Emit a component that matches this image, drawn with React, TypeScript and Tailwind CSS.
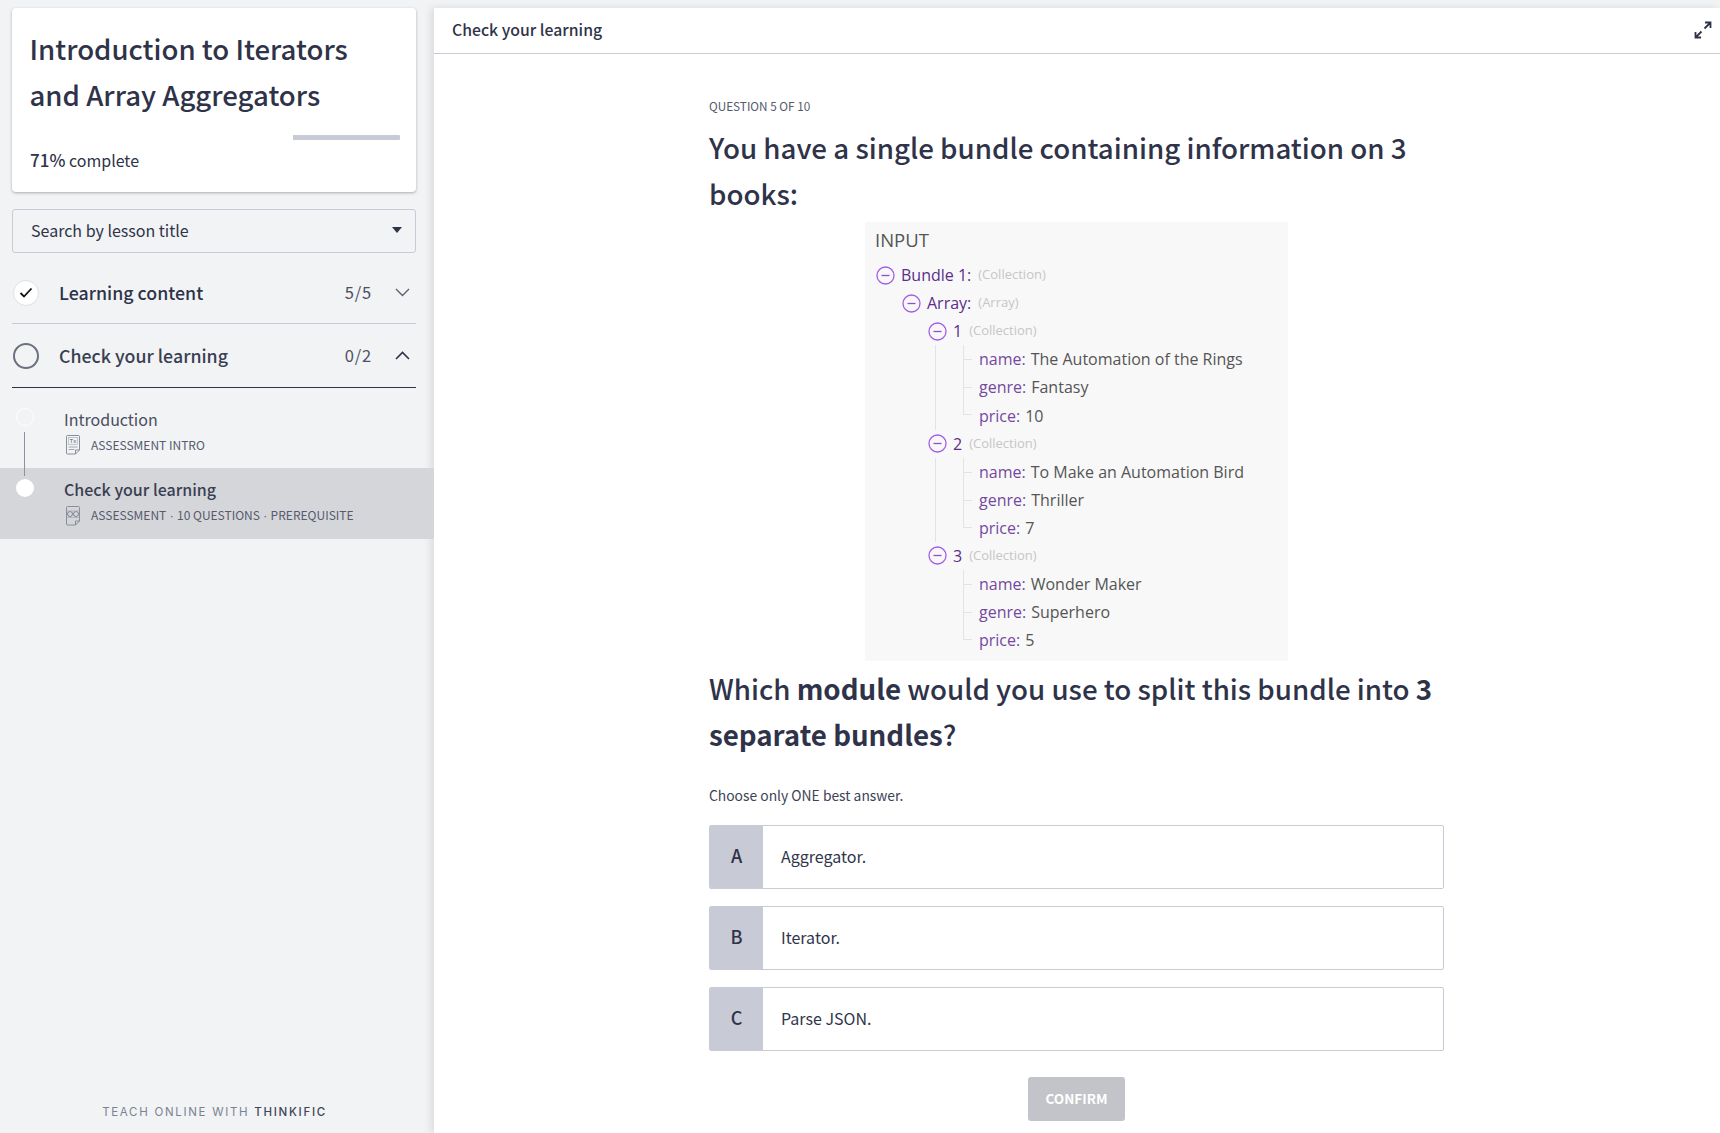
import React from "react";

const sans = "font-['Noto_Sans_CJK_SC','Noto_Sans',sans-serif]";

function DocIcon({ kind }: { kind: "tx" | "quiz" }) {
  return (
    <svg width="16" height="20" viewBox="0 0 16 20" fill="none" className="shrink-0">
      <path d="M1.5 1.5a1 1 0 0 1 1-1h11a1 1 0 0 1 1 1v13.5l-4 4h-8a1 1 0 0 1-1-1z" stroke="#8a8d9a" strokeWidth="1" />
      <path d="M10.5 19v-4h4" stroke="#8a8d9a" strokeWidth="1" />
      {kind === "tx" ? (
        <>
          <rect x="3.5" y="2.5" width="9" height="7" stroke="#a5a7b2" strokeWidth=".6" />
          <text x="4.5" y="8" fontSize="6" fill="#555a6c" fontFamily="Liberation Sans">Tx</text>
          <path d="M3.5 12h9M3.5 14.5h6" stroke="#a5a7b2" strokeWidth="1" />
        </>
      ) : (
        <>
          <circle cx="5" cy="8" r="2.5" stroke="#777b8a" strokeWidth=".9" />
          <circle cx="11" cy="8" r="2.5" stroke="#777b8a" strokeWidth=".9" />
          <path d="M1.5 5h13M1.5 11.5h13" stroke="#a5a7b2" strokeWidth=".7" />
        </>
      )}
    </svg>
  );
}

function Minus() {
  return (
    <svg width="19" height="19" viewBox="0 0 19 19" fill="none" className="shrink-0">
      <circle cx="9.5" cy="9.5" r="8.5" stroke="#a25ce8" strokeWidth="1.3" />
      <path d="M5.5 9.5h8" stroke="#8f4fd0" strokeWidth="1.3" />
    </svg>
  );
}

function Node({ indent, label, type }: { indent: string; label: string; type: string }) {
  return (
    <div className={`flex h-[28.1px] items-center ${indent}`}>
      <Minus />
      <span className="ml-[6px] text-[16px] text-[#5b2d8c]">{label}</span>
      <span className="ml-[7px] text-[13px] text-[#c6c6c6]">{type}</span>
    </div>
  );
}

function Field({ k, v, last }: { k: string; v: string; last?: boolean }) {
  return (
    <div className="relative flex h-[28.1px] items-center pl-[16px]">
      <span className={`absolute left-0 top-0 w-[9px] border-l border-[#e3e3e3] ${last ? "h-[14px] border-b" : "h-full"}`} />
      {!last && <span className="absolute left-0 top-[14px] h-px w-[9px] bg-[#e3e3e3]" />}
      <span className="text-[16px] text-[#74489f]">{k}</span>
      <span className="ml-[5px] text-[16px] text-[#555555]">{v}</span>
    </div>
  );
}

function Book({ n, items, line }: { n: string; items: [string, string][]; line: boolean }) {
  return (
    <div>
      <Node indent="ml-[62px]" label={n} type="(Collection)" />
      <div className={`ml-[69px] pl-[27px] ${line ? "border-l border-[#e3e3e3]" : "border-l border-transparent"}`}>
        {items.map(([k, v], i) => (
          <Field key={k} k={k} v={v} last={i === items.length - 1} />
        ))}
      </div>
    </div>
  );
}

function TreeImage() {
  return (
    <div className="mx-auto h-[439px] w-[423px] bg-[#f8f8f8] pl-[10px] pt-[2px] font-['Open_Sans',sans-serif]">
      <div className="flex h-[37px] items-center pb-[6px] text-[18.5px] text-[#555555]">INPUT</div>
      <div className="-ml-[10px] pl-[1px]">
        <Node indent="ml-[10px]" label="Bundle 1:" type="(Collection)" />
        <Node indent="ml-[36px]" label="Array:" type="(Array)" />
        <Book n="1" line items={[["name:", "The Automation of the Rings"], ["genre:", "Fantasy"], ["price:", "10"]]} />
        <Book n="2" line items={[["name:", "To Make an Automation Bird"], ["genre:", "Thriller"], ["price:", "7"]]} />
        <Book n="3" line={false} items={[["name:", "Wonder Maker"], ["genre:", "Superhero"], ["price:", "5"]]} />
      </div>
    </div>
  );
}

function Option({ letter, text }: { letter: string; text: string }) {
  return (
    <div className="flex h-[64px] overflow-hidden rounded-[2px] border border-[#c8cad5] bg-white">
      <div className="flex w-[53px] shrink-0 items-center justify-center bg-[#c8cad5] pb-[3px] text-[18px] font-medium text-[#2f3349]">{letter}</div>
      <div className="flex items-center pb-[3px] pl-[18px] text-[16px] text-[#30354a]">{text}</div>
    </div>
  );
}

function Dot() {
  return <span className="font-['Liberation_Sans',sans-serif]"> · </span>;
}

export default function App() {
  return (
    <div className={`flex h-[1133px] w-[1720px] overflow-hidden bg-[#f1f3f5] text-[#2f3349] ${sans}`}>
      <aside className="flex w-[434px] shrink-0 flex-col pt-2">
        <div className="mx-3 h-[184px] w-[404px] rounded-[4px] bg-white px-[18px] pt-[17px] shadow-[0_1px_3px_rgba(0,0,0,0.3)]">
          <h1 className="-ml-[0.5px] text-[27.6px] font-medium leading-[46px]">Introduction to Iterators and Array Aggregators</h1>
          <div className="mt-[18px] flex h-[5px] w-[370px] rounded-[1px] bg-[#c8cad5]">
            <div className="w-[71%] bg-white" />
          </div>
          <div className="mt-[7px] text-[16px] leading-[26px]">
            <span className="text-[17px] font-medium">71%</span> complete
          </div>
        </div>
        <div className="mx-3 mt-[17px] flex h-[44px] w-[404px] items-center justify-between rounded-[3px] border border-[#c8cad5] pb-[3px] pl-[18px] pr-[13px] text-[16px]">
          <span>Search by lesson title</span>
          <span className="h-0 w-0 border-x-[5px] border-t-[6px] border-x-transparent border-t-[#2f3349]" />
        </div>

        <div className="mx-3 mt-[17px] flex h-[54px] w-[404px] items-center border-b border-[#c8cad5] pb-[8px] pl-[1px]">
          <span className="flex h-[26px] w-[26px] items-center justify-center rounded-full border border-[#dde0e6] bg-white">
            <svg width="14" height="11" viewBox="0 0 14 11" fill="none">
              <path d="M1.5 6l3.5 3.5 7.5-8" stroke="#111" strokeWidth="1.8" />
            </svg>
          </span>
          <span className="ml-[20px] text-[17.8px] font-medium">Learning content</span>
          <span className="ml-auto text-[16.5px] tracking-[0.8px] text-[#4d5163]">5/5</span>
          <svg className="ml-[23px] mr-[6px]" width="15" height="9" viewBox="0 0 15 9" fill="none">
            <path d="M1 1l6.5 6.5L14 1" stroke="#5d6172" strokeWidth="1.4" />
          </svg>
        </div>
        <div className="mx-3 flex h-[64px] w-[404px] items-center border-b border-[#2f3349] pl-[1px]">
          <span className="h-[26px] w-[26px] rounded-full border-2 border-[#6c7080]" />
          <span className="ml-[20px] text-[17.8px] font-medium text-[#3a3e52]">Check your learning</span>
          <span className="ml-auto text-[16.5px] tracking-[0.8px] text-[#4d5163]">0/2</span>
          <svg className="ml-[23px] mr-[6px]" width="15" height="9" viewBox="0 0 15 9" fill="none">
            <path d="M1 8l6.5-6.5L14 8" stroke="#2f3349" strokeWidth="1.6" />
          </svg>
        </div>

        <div className="relative h-[80px] pl-[64px] pt-[18px]">
          <span className="absolute left-[16px] top-[20px] h-[18px] w-[18px] rounded-full border border-white" />
          <span className="absolute left-[24px] top-[44px] h-[36px] w-px bg-[#8d90a0]" />
          <div className="text-[16px] leading-[26px] text-[#4a4e61]">Introduction</div>
          <div className="mt-[3px] flex items-center gap-[10px] text-[12px] leading-[20px] text-[#565a6c]">
            <span className="ml-[1px]"><DocIcon kind="tx" /></span>
            <span>ASSESSMENT INTRO</span>
          </div>
        </div>
        <div className="relative h-[71px] bg-[#d5d6da] pl-[64px] pt-[8px]">
          <span className="absolute left-[16px] top-[11px] h-[18px] w-[18px] rounded-full bg-white" />
          <span className="absolute left-[24px] top-0 h-[8px] w-px bg-[#8d90a0]" />
          <div className="text-[16px] font-medium leading-[26px] text-[#3a3e52]">Check your learning</div>
          <div className="mt-[3px] flex items-center gap-[10px] text-[12px] leading-[20px] text-[#565a6c]">
            <span className="ml-[1px]"><DocIcon kind="quiz" /></span>
            <span>ASSESSMENT<Dot />10 QUESTIONS<Dot />PREREQUISITE</span>
          </div>
        </div>

        <div className="mb-[12px] mt-auto pr-[5px] text-center font-['Inter',sans-serif] text-[11.5px] tracking-[1.7px] text-[#7a8290]">
          TEACH ONLINE WITH <span className="font-medium text-[#3f4757]">THINKIFIC</span>
        </div>
      </aside>

      <main className="mt-2 flex min-w-0 flex-1 flex-col bg-white shadow-[-3px_0_8px_rgba(0,0,0,0.1)]">
        <header className="flex h-[46px] shrink-0 items-center justify-between border-b border-[#c8cad5] pb-[1px] pl-[18px] pr-[7px]">
          <span className="text-[15.8px] font-medium">Check your learning</span>
          <svg width="20" height="20" viewBox="0 0 20 20" fill="none">
            <path d="M11.5 8.5L17.5 2.5M12 2.5h5.5V8M8.5 11.5L2.5 17.5M2.5 12v5.5H8" stroke="#2f3349" strokeWidth="1.8" />
          </svg>
        </header>
        <div className="ml-[275px] w-[735px] pt-[43px]">
          <div className="text-[11.75px] uppercase leading-[18px] text-[#565a6c]">Question 5 of 10</div>
          <h2 className="mt-[9px] text-[27.7px] font-medium leading-[46px]">You have a single bundle containing information on 3 books:</h2>
          <div className="mt-[6px]">
            <TreeImage />
          </div>
          <h2 className="mt-[4px] text-[27.7px] font-medium leading-[46px]">
            Which <strong className="font-bold">module</strong> would you use to split this bundle into <strong className="font-bold">3 separate bundles</strong>?
          </h2>
          <div className="mt-[26px] text-[13.85px] leading-[24px] text-[#3d4256]">Choose only ONE best answer.</div>
          <div className="mt-[18px] flex flex-col gap-[17px]">
            <Option letter="A" text="Aggregator." />
            <Option letter="B" text="Iterator." />
            <Option letter="C" text="Parse JSON." />
          </div>
          <div className="mt-[26px] flex justify-center">
            <button className="h-[44px] w-[97px] rounded-[3px] bg-[#c3c4ca] pb-[1px] text-[13.5px] font-bold text-white">CONFIRM</button>
          </div>
        </div>
      </main>
    </div>
  );
}
